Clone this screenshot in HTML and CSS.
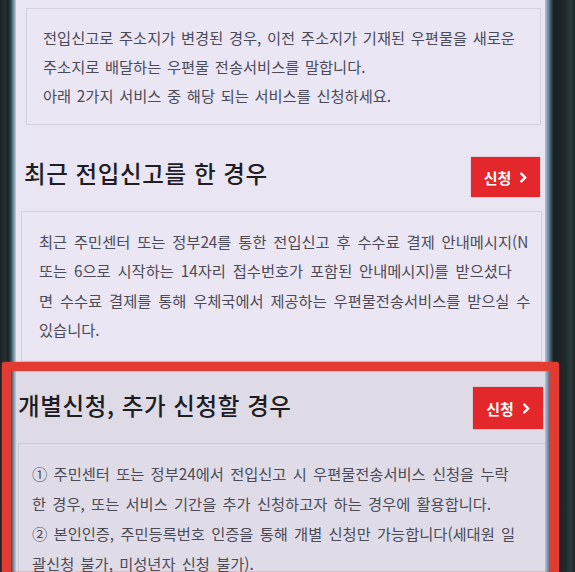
FILE: index.html
```html
<!DOCTYPE html>
<html lang="ko">
<head>
<meta charset="utf-8">
<title>우편물전송서비스</title>
<link rel="stylesheet" href="styles.css">
</head>
<body>
<div class="device">
  <div class="bezel bezel-left"></div>
  <main class="screen">
    <div class="box intro">
      <p>전입신고로 주소지가 변경된 경우, 이전 주소지가 기재된 우편물을 새로운<br>주소지로 배달하는 우편물 전송서비스를 말합니다.<br>아래 2가지 서비스 중 해당 되는 서비스를 신청하세요.</p>
    </div>

    <section class="service service-recent">
      <div class="service-head">
        <h2>최근 전입신고를 한 경우</h2>
        <a class="btn" href="#">신청<svg class="chev" viewBox="0 0 8 12" width="7" height="11"><path d="M1.5 1.5 L6 6 L1.5 10.5" fill="none" stroke="#fff" stroke-width="2.8" stroke-linecap="round" stroke-linejoin="round"/></svg></a>
      </div>
      <div class="box">
        <p>최근 주민센터 또는 정부24를 통한 전입신고 후 수수료 결제 안내메시지(N<br>또는 6으로 시작하는 14자리 접수번호가 포함된 안내메시지)를 받으셨다<br>면 수수료 결제를 통해 우체국에서 제공하는 우편물전송서비스를 받으실 수<br>있습니다.</p>
      </div>
    </section>

    <section class="service service-extra">
      <div class="service-head">
        <h2>개별신청, 추가 신청할 경우</h2>
        <a class="btn" href="#">신청<svg class="chev" viewBox="0 0 8 12" width="7" height="11"><path d="M1.5 1.5 L6 6 L1.5 10.5" fill="none" stroke="#fff" stroke-width="2.8" stroke-linecap="round" stroke-linejoin="round"/></svg></a>
      </div>
      <div class="box">
        <p>① 주민센터 또는 정부24에서 전입신고 시 우편물전송서비스 신청을 누락<br>한 경우, 또는 서비스 기간을 추가 신청하고자 하는 경우에 활용합니다.<br>② 본인인증, 주민등록번호 인증을 통해 개별 신청만 가능합니다(세대원 일<br>괄신청 불가, 미성년자 신청 불가).</p>
      </div>
    </section>
  </main>
  <div class="bezel bezel-right"></div>
</div>
<div class="highlight"></div>
</body>
</html>
```

FILE: styles.css
```css
* { box-sizing: border-box; }

html, body {
  margin: 0;
  padding: 0;
  width: 575px;
  height: 572px;
  overflow: hidden;
  background: #1d2628;
  font-family: "Noto Sans CJK KR", "Noto Sans", sans-serif;
}

.device {
  display: flex;
  width: 575px;
  height: 572px;
  overflow: hidden;
}

.bezel-left {
  width: 16px;
  flex: none;
  background: linear-gradient(to right, #1b2224 0, #243033 5px, #1a2123 8px, #2f4a52 11px, #7fa0b0 14px, #c9c8dc 16px);
}

.bezel-right {
  width: 30px;
  flex: none;
  background: linear-gradient(to right, #b7c4dc 0, #5d7f95 4px, #2a3c44 7px, #1a2022 9px, #20292b 20px, #2a3a3a 26px, #1c2426 30px);
}

.screen {
  flex: 1;
  background: #e9e5f3;
  display: flex;
  flex-direction: column;
  overflow: hidden;
}

.screen > * { flex-shrink: 0; }

.box {
  border: 1px solid #d5d1e0;
  background: #eae6f4;
}

.box p {
  margin: 0;
  font-size: 15.3px;
  line-height: 29.3px;
  color: #4c4a56;
  word-spacing: 2px;
  white-space: nowrap;
}

.intro {
  margin: 8px 4px 0 10px;
  height: 117px;
  padding: 14px 0 0 16px;
}

.intro p { line-height: 28.8px; word-spacing: 1.4px; }

.service-head {
  display: flex;
  justify-content: space-between;
  align-items: center;
}

.service-head h2 {
  margin: 0 0 8px;
  font-size: 23.5px;
  font-weight: 500;
  color: #1e1d24;
  letter-spacing: 0.6px;
  line-height: 30px;
}

.btn {
  display: flex;
  align-items: center;
  justify-content: center;
  gap: 9px;
  width: 69px;
  height: 40px;
  background: #e3272a;
  color: #fff;
  font-size: 15px;
  font-weight: 700;
  text-decoration: none;
  box-shadow: 0 0 1px rgba(200, 30, 30, 0.6);
}

.chev { margin-top: 1px; }

.service-recent {
  padding-top: 32px;
}

.service-recent .service-head {
  padding-left: 8px;
  padding-right: 5px;
}

.service-recent .box {
  margin: 14px 3px 0 5px;
  height: 151px;
  padding: 15px 0 0 17px;
}

.service-recent .box p { word-spacing: 2.6px; }

.service-extra {
  padding-top: 25px;
  background: #dedbe7;
  flex: 1 0 auto;
}

.service-extra .service-head {
  padding-left: 2px;
  padding-right: 2px;
}

.service-extra .service-head h2 { margin-bottom: 6px; }

.service-extra .btn {
  width: 70px;
  height: 42px;
}

.service-extra .box {
  margin: 14px 0 0 2px;
  padding: 14px 0 0 13px;
  background: #dfdce8;
  border-color: #cfcbd9;
  border-right: none;
}

.service-extra .box p { line-height: 30px; }

.highlight {
  position: absolute;
  left: 2px;
  top: 362px;
  width: 557px;
  height: 210px;
  border: 9px solid #e23b31;
  border-bottom: none;
  border-radius: 3px 3px 0 0;
  box-shadow: 0 0 2px rgba(230, 60, 50, 0.8), inset 0 0 2px rgba(230, 60, 50, 0.6);
  pointer-events: none;
}
```
